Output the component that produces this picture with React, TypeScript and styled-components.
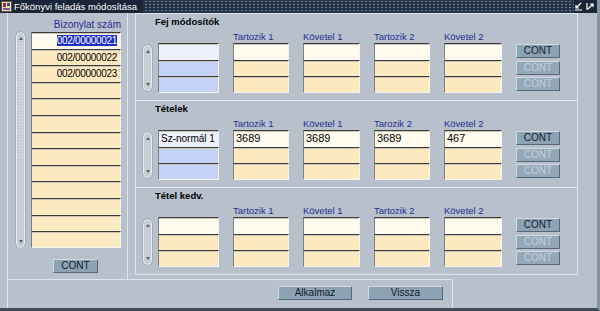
import React from 'react'
import styled, { createGlobalStyle } from 'styled-components'

const GlobalStyle = createGlobalStyle`
  html, body {
    margin: 0;
    padding: 0;
    background: #b7c0cb;
  }
  * {
    box-sizing: border-box;
  }
`

const Window = styled.div`
  width: 600px;
  height: 311px;
  background: #b7c0cb;
  display: flex;
  flex-direction: column;
  overflow: hidden;
  font-family: 'Liberation Sans', Arial, sans-serif;
  border-right: 3px solid #8894a2;
  border-bottom: 3px solid #3f4b58;
`

const TitleBar = styled.div`
  height: 13px;
  flex: none;
  display: flex;
  align-items: center;
  background-color: #25324a;
  background-image: radial-gradient(#6e7e96 0.8px, transparent 1px);
  background-size: 4px 3px;
`

const TitleLabel = styled.div`
  height: 13px;
  display: flex;
  align-items: center;
  gap: 2px;
  padding: 0 6px 0 1px;
  background: #1a2538;
  color: #fff;
  font-size: 9.5px;
  line-height: 13px;
  white-space: nowrap;
`

const TitleButtons = styled.div`
  margin-left: auto;
  display: flex;
  gap: 3px;
  padding-right: 2px;
  background: #1a2538;
  height: 13px;
  align-items: center;
`

const Content = styled.div`
  flex: 1;
  margin-left: 7px;
  border-left: 1px solid #dfe5ec;
  display: flex;
  flex-direction: column;
`

const TopRow = styled.div`
  height: 266px;
  display: flex;
  align-items: flex-start;
`

const LeftPanel = styled.div`
  width: 120px;
  height: 266px;
  border-right: 1px solid #dfe5ec;
  display: flex;
  flex-direction: column;
`

const ListHeader = styled.div`
  margin-top: 5px;
  height: 14px;
  line-height: 13px;
  text-align: right;
  padding-right: 6px;
  color: #262f94;
  font-size: 10px;
`

const ListArea = styled.div`
  display: flex;
  gap: 6px;
  padding-left: 8px;
`

const Scroll = styled.div<{ $h: number; $top?: number }>`
  width: 9px;
  height: ${(p) => p.$h}px;
  margin-top: ${(p) => p.$top ?? 0}px;
  flex: none;
  border-radius: 5px;
  background: #c6cdd5;
  border: 1px solid #e9edf1;
  box-shadow: 0 0 0 0.5px #8e99a6;
  display: flex;
  flex-direction: column;
  justify-content: space-between;
  align-items: center;
  padding: 2px 0;
`

const Arrow = styled.div<{ $down?: boolean }>`
  width: 0;
  height: 0;
  border-left: 2.5px solid transparent;
  border-right: 2.5px solid transparent;
  ${(p) => (p.$down ? 'border-top: 3px solid #55606c;' : 'border-bottom: 3px solid #55606c;')}
  margin: 2px 0;
`

const Thumb = styled.div<{ $h: number }>`
  width: 5px;
  height: ${(p) => p.$h}px;
  background-image: radial-gradient(#eef1f4 0.7px, transparent 1px);
  background-size: 3px 3px;
`

const Spacer = styled.div`
  flex: 1;
`

const ListColumn = styled.div`
  width: 90px;
  display: flex;
  flex-direction: column;
`

type Tone = 'cur' | 'cream' | 'curBlue' | 'blue'

const tones: Record<Tone, string> = {
  cur: '#fffbee',
  cream: '#fde9bf',
  curBlue: '#eef0fc',
  blue: '#c3d2f6',
}

const Field = styled.div<{ $tone: Tone; $right?: boolean; $size?: number }>`
  height: 16.6px;
  background: ${(p) => tones[p.$tone]};
  border-top: 1px solid #3c3c3c;
  border-left: 1px solid #808080;
  border-right: 1px solid #f4f4f4;
  box-shadow: inset 0 1px 0 #c9c4b4;
  font-size: ${(p) => p.$size ?? 10}px;
  letter-spacing: ${(p) => (p.$right ? '-0.3px' : '0')};
  line-height: 15px;
  color: #000;
  padding: 0 3px 0 2px;
  text-align: ${(p) => (p.$right ? 'right' : 'left')};
  white-space: nowrap;
  overflow: hidden;
  &:last-child {
    border-bottom: 1px solid #f4f4f4;
  }
`

const Selected = styled.span`
  background: #1c2fc4;
  color: #fff;
`

const Button = styled.button<{ $w: number; $off?: boolean }>`
  width: ${(p) => p.$w}px;
  height: 14px;
  padding: 0;
  margin: 0;
  font-family: 'Liberation Sans', Arial, sans-serif;
  font-size: 10px;
  line-height: 12px;
  color: ${(p) => (p.$off ? '#c7d3dd' : '#141c2c')};
  background: ${(p) => (p.$off ? '#93a8b8' : '#8ca3b4')};
  border: 1px solid;
  border-color: #d2dbe3 #55687a #55687a #d2dbe3;
  text-align: center;
`

const LeftButtonRow = styled.div`
  margin-top: 7px;
  padding-left: 45px;
`

const RightBox = styled.div`
  margin-left: 7px;
  width: 443px;
  height: 262px;
  border: 1px solid #dfe5ec;
  display: flex;
  flex-direction: column;
`

const Section = styled.div<{ $first?: boolean }>`
  height: ${(p) => (p.$first ? 86 : 87)}px;
  border-top: ${(p) => (p.$first ? 'none' : '1px solid #e2e7ed')};
  padding-top: 2px;
`

const SectionTitle = styled.div`
  height: 12px;
  line-height: 12px;
  margin-left: 19px;
  font-size: 9.5px;
  font-weight: bold;
  color: #000;
`

const SectionBody = styled.div`
  display: flex;
  margin-top: 3px;
  padding-left: 7px;
  gap: 6px;
`

const Grid = styled.div`
  display: grid;
  grid-template-columns: 61px 56px 57px 56px 58px 45px;
  grid-template-rows: 12px repeat(3, 16.6px);
  column-gap: 14px;
`

const ColHead = styled.div`
  font-size: 9.5px;
  line-height: 12px;
  color: #262f94;
  white-space: nowrap;
`

const Cell = styled.div`
  display: flex;
  flex-direction: column;
  grid-row: 2 / span 3;
`

const ButtonCell = styled.div<{ $row: number }>`
  grid-column: 6;
  grid-row: ${(p) => p.$row};
  display: flex;
  align-items: center;
`

const BottomBar = styled.div`
  width: 445px;
  height: 29px;
  border-top: 1px solid #dfe5ec;
  border-right: 1px solid #dfe5ec;
  display: flex;
  justify-content: flex-end;
  gap: 16px;
  padding: 6px 9px 0 0;
`

const TitleIcon = () => (
  <svg width="11" height="11" viewBox="0 0 11 11">
    <rect x="0.5" y="0.5" width="10" height="10" fill="#e8dcc0" stroke="#6b5a3a" />
    <rect x="2" y="2" width="3" height="4" fill="#b0262e" />
    <rect x="6" y="2" width="3" height="3" fill="#3a3f9a" />
    <rect x="2" y="7" width="7" height="2" fill="#7a5a9a" />
  </svg>
)

const MinIcon = () => (
  <svg width="9" height="9" viewBox="0 0 9 9">
    <path d="M7 1 L2 6 M2 3 V6 H5 M1 8 H8" stroke="#fff" strokeWidth="1.2" fill="none" />
  </svg>
)

const MaxIcon = () => (
  <svg width="9" height="9" viewBox="0 0 9 9">
    <path d="M2 7 L7 2 M4 2 H7 V5 M1 1 V8" stroke="#fff" strokeWidth="1.2" fill="none" />
  </svg>
)

const headers = ['Tartozik 1', 'Követel 1', 'Tartozik 2', 'Követel 2']

type SectionProps = {
  title: string
  first?: boolean
  heads?: string[]
  label?: string
  values?: string[]
  plainFirst?: boolean
}

const FormSection = ({ title, first, heads = headers, label, values, plainFirst }: SectionProps) => (
  <Section $first={first}>
    <SectionTitle>{title}</SectionTitle>
    <SectionBody>
      <Scroll $h={46} $top={14}>
        <Arrow />
        <Arrow $down />
      </Scroll>
      <Grid>
        <div />
        {heads.map((h) => (
          <ColHead key={h}>{h}</ColHead>
        ))}
        <div />
        <Cell>
          {[0, 1, 2].map((r) => (
            <Field
              key={r}
              $size={10}
              $tone={plainFirst ? (r === 0 ? 'cur' : 'cream') : r === 0 ? 'curBlue' : 'blue'}
            >
              {r === 0 ? label : ''}
            </Field>
          ))}
        </Cell>
        {heads.map((h, i) => (
          <Cell key={h}>
            {[0, 1, 2].map((r) => (
              <Field key={r} $size={11} $tone={r === 0 ? 'cur' : 'cream'}>
                {r === 0 && values ? values[i] : ''}
              </Field>
            ))}
          </Cell>
        ))}
        {[0, 1, 2].map((r) => (
          <ButtonCell key={r} $row={r + 2}>
            <Button $w={44} $off={r > 0}>
              CONT
            </Button>
          </ButtonCell>
        ))}
      </Grid>
    </SectionBody>
  </Section>
)

const docs = ['002/00000021', '002/00000022', '002/00000023']

export default function App() {
  return (
    <>
      <GlobalStyle />
      <Window>
        <TitleBar>
          <TitleLabel>
            <TitleIcon />
            Főkönyvi feladás módosítása
          </TitleLabel>
          <TitleButtons>
            <MinIcon />
            <MaxIcon />
          </TitleButtons>
        </TitleBar>
        <Content>
          <TopRow>
            <LeftPanel>
              <ListHeader>Bizonylat szám</ListHeader>
              <ListArea>
                <Scroll $h={216}>
                  <Arrow />
                  <Thumb $h={118} />
                  <Spacer />
                  <Arrow $down />
                </Scroll>
                <ListColumn>
                  {Array.from({ length: 13 }).map((_, i) => (
                    <Field key={i} $right $tone={i === 0 ? 'cur' : 'cream'}>
                      {i === 0 ? <Selected>{docs[0]}</Selected> : docs[i] ?? ''}
                    </Field>
                  ))}
                </ListColumn>
              </ListArea>
              <LeftButtonRow>
                <Button $w={45}>CONT</Button>
              </LeftButtonRow>
            </LeftPanel>
            <RightBox>
              <FormSection first title="Fej módosítók" />
              <FormSection
                title="Tételek"
                heads={['Tartozik 1', 'Követel 1', 'Tarozik 2', 'Követel 2']}
                label="Sz-normál 1"
                values={['3689', '3689', '3689', '467']}
              />
              <FormSection title="Tétel kedv." plainFirst />
            </RightBox>
          </TopRow>
          <BottomBar>
            <Button $w={74}>Alkalmaz</Button>
            <Button $w={75}>Vissza</Button>
          </BottomBar>
        </Content>
      </Window>
    </>
  )
}
